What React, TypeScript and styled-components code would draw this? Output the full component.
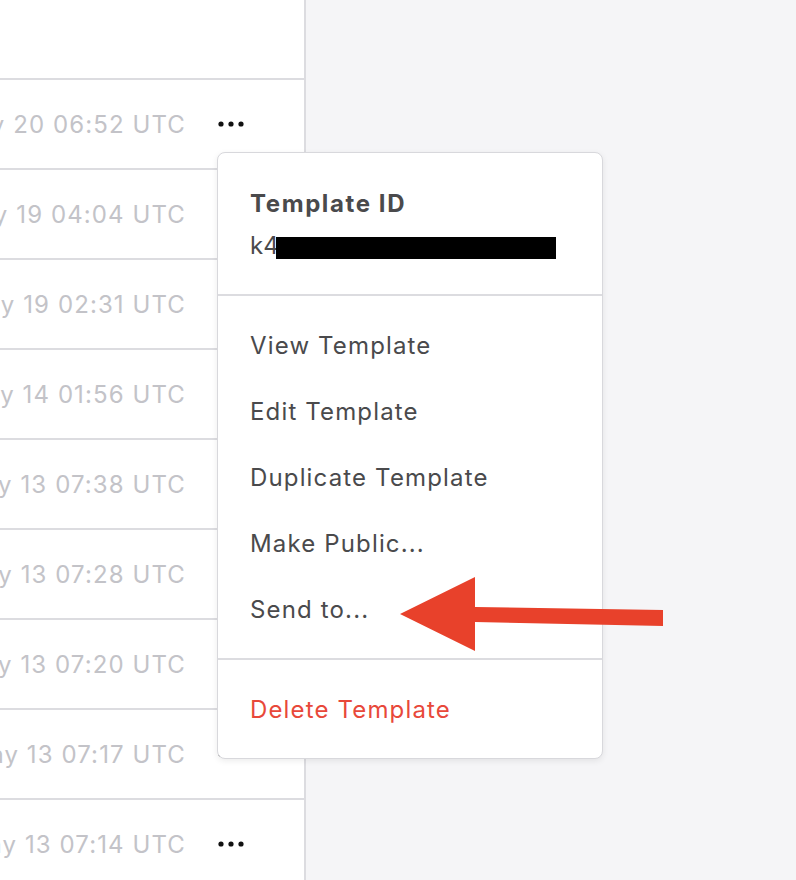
import styled, { createGlobalStyle } from "styled-components";

const GlobalStyle = createGlobalStyle`
  html, body {
    margin: 0;
    padding: 0;
    background: #f5f5f7;
  }
  body {
    font-family: Inter, "Liberation Sans", Arial, sans-serif;
    -webkit-font-smoothing: antialiased;
  }
`;

const Page = styled.div`
  position: relative;
  display: flex;
  width: 796px;
  height: 880px;
  overflow: hidden;
`;

const ListPanel = styled.div`
  width: 304px;
  flex-shrink: 0;
  background: #ffffff;
  border-right: 2px solid #dcdce0;
  overflow: hidden;
`;

const HeaderSpace = styled.div`
  height: 78px;
  border-bottom: 2px solid #dcdce0;
`;

const Row = styled.div`
  display: flex;
  align-items: center;
  justify-content: flex-end;
  height: 88px;
  padding-right: 60px;
  border-bottom: 2px solid #dcdce0;
`;

const DateText = styled.span`
  flex-shrink: 0;
  white-space: nowrap;
  font-size: 24px;
  color: #c3c3c8;
  letter-spacing: 1.1px;
`;

const MoreButton = styled.button`
  display: flex;
  align-items: center;
  margin-left: 32px;
  padding: 0;
  border: none;
  background: none;
  cursor: pointer;
`;

const Backdrop = styled.div`
  flex: 1;
  background: #f5f5f7;
`;

const Menu = styled.div`
  position: absolute;
  left: 217px;
  top: 152px;
  width: 384px;
  background: #ffffff;
  border: 1px solid #d8d8dc;
  border-radius: 8px;
  box-shadow: 0 2px 6px rgba(0, 0, 0, 0.08);
`;

const MenuHeader = styled.div`
  padding: 33px 32px 30px;
  border-bottom: 2px solid #dcdce0;
`;

const HeaderTitle = styled.div`
  font-size: 24px;
  line-height: 36px;
  font-weight: 700;
  color: #4a4a4c;
  letter-spacing: 1.6px;
`;

const HeaderId = styled.div`
  display: flex;
  align-items: center;
  margin-top: 6px;
  font-size: 24px;
  line-height: 36px;
  color: #4a4a4c;
  letter-spacing: 1.1px;
`;

const Redacted = styled.span`
  display: inline-block;
  width: 280px;
  height: 22px;
  margin-top: 4px;
  margin-left: -4px;
  background: #000000;
`;

const MenuSection = styled.div<{ $last?: boolean }>`
  padding: 16px 0;
  border-bottom: ${(p) => (p.$last ? "none" : "2px solid #dcdce0")};
`;

const MenuItem = styled.div<{ $danger?: boolean }>`
  height: 66px;
  display: flex;
  align-items: center;
  padding-left: 32px;
  font-size: 24px;
  color: ${(p) => (p.$danger ? "#e8483a" : "#4a4a4c")};
  letter-spacing: 1.15px;
`;

const ArrowMark = styled.svg`
  position: absolute;
  left: 0;
  top: 0;
  pointer-events: none;
`;

const rows = [
  "May 20 06:52 UTC",
  "May 19 04:04 UTC",
  "May 19 02:31 UTC",
  "May 14 01:56 UTC",
  "May 13 07:38 UTC",
  "May 13 07:28 UTC",
  "May 13 07:20 UTC",
  "May 13 07:17 UTC",
  "May 13 07:14 UTC",
];

const Dots = () => (
  <svg width="26" height="6" viewBox="0 0 26 6">
    <circle cx="3" cy="3" r="2.6" fill="#111" />
    <circle cx="13" cy="3" r="2.6" fill="#111" />
    <circle cx="23" cy="3" r="2.6" fill="#111" />
  </svg>
);

const App = () => {
  return (
    <Page>
      <GlobalStyle />
      <ListPanel>
        <HeaderSpace />
        {rows.map((d) => (
          <Row key={d}>
            <DateText>{d}</DateText>
            <MoreButton>
              <Dots />
            </MoreButton>
          </Row>
        ))}
      </ListPanel>
      <Backdrop />

      <Menu>
        <MenuHeader>
          <HeaderTitle>Template ID</HeaderTitle>
          <HeaderId>
            k4
            <Redacted />
          </HeaderId>
        </MenuHeader>
        <MenuSection>
          <MenuItem>View Template</MenuItem>
          <MenuItem>Edit Template</MenuItem>
          <MenuItem>Duplicate Template</MenuItem>
          <MenuItem>Make Public...</MenuItem>
          <MenuItem>Send to...</MenuItem>
        </MenuSection>
        <MenuSection $last>
          <MenuItem $danger>Delete Template</MenuItem>
        </MenuSection>
      </Menu>

      <ArrowMark width="796" height="880" viewBox="0 0 796 880">
        <polygon
          points="400,614 475,577 475,607 663,610 663,626 475,622 475,651"
          fill="#e8412b"
        />
      </ArrowMark>
    </Page>
  );
};

export default App;
